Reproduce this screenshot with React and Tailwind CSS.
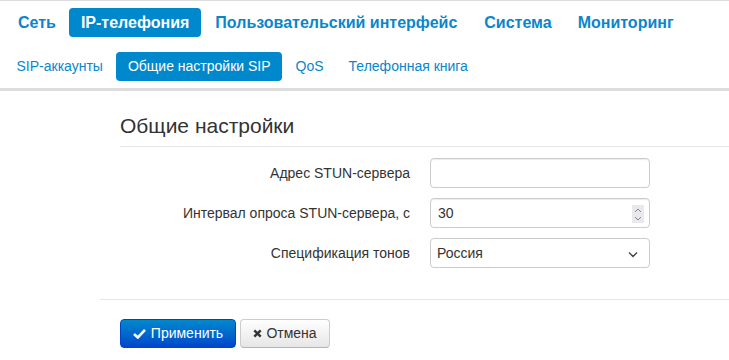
import React from "react";

const font = { fontFamily: '"Liberation Sans", Arial, sans-serif' };

function Chevron() {
  return (
    <svg width="10" height="7" viewBox="0 0 10 7" className="absolute right-[11px] top-[12px]">
      <path d="M1 1.5 L5 5.5 L9 1.5" fill="none" stroke="#444" strokeWidth="1.4" />
    </svg>
  );
}

function Spinner() {
  return (
    <div className="absolute right-[5px] top-[6px] w-[12px] h-[18px] bg-[#e9e9ed] flex flex-col items-center justify-center gap-[3px]">
      <svg width="8" height="5" viewBox="0 0 8 5">
        <path d="M1 4 L4 1 L7 4" fill="none" stroke="#888" strokeWidth="1" />
      </svg>
      <svg width="8" height="5" viewBox="0 0 8 5">
        <path d="M1 1 L4 4 L7 1" fill="none" stroke="#888" strokeWidth="1" />
      </svg>
    </div>
  );
}

export default function App() {
  const main = [
    ["Сеть", ""],
    ["IP-телефония", "ml-[1px]"],
    ["Пользовательский интерфейс", "ml-[2px]"],
    ["Система", "ml-[3px]"],
    ["Мониторинг", "ml-[2px]"],
  ];
  const sub = ["SIP-аккаунты", "Общие настройки SIP", "QoS", "Телефонная книга"];
  return (
    <div className="w-[729px] h-[360px] bg-white text-[#333] overflow-hidden" style={font}>
      <div className="border-t border-[#ddd]">
        <div className="flex pl-[6px] pt-[7px] h-[45px]">
          {main.map(([m, ml], i) => (
            <div
              key={m}
              className={
                "h-[29px] px-3 flex items-center rounded-[4px] text-[16px] font-bold " +
                ml +
                " " +
                (i === 1 ? "bg-[#0088cc] text-white" : "text-[#0a86cb]")
              }
            >
              {m}
            </div>
          ))}
        </div>
        <div className="flex gap-[2px] pl-[5px] pt-[6px] h-[42px]">
          {sub.map((m, i) => (
            <div
              key={m}
              className={
                "h-[29px] px-[11.5px] flex items-center rounded-[4px] text-[14px] " +
                (i === 1 ? "bg-[#0088cc] text-white" : "text-[#0a86cb]")
              }
            >
              {m}
            </div>
          ))}
        </div>
        <div className="h-[3px] bg-[#ddd]" />
      </div>

      <div className="pl-[100px]">
        <div className="pl-5 pt-[22px]">
          <div className="text-[21px] leading-[26px] h-[33px]">Общие настройки</div>
          <div className="border-t border-[#e5e5e5]" />
          <div className="flex flex-col gap-[10px] pt-[11px] pb-[31px]">
            <div className="flex items-center">
              <div className="w-[290px] text-right text-[14px]">Адрес STUN-сервера</div>
              <div className="ml-5 w-[220px] h-[30px] border border-[#ccc] rounded-[4px] shadow-[inset_0_1px_1px_rgba(0,0,0,0.075)]" />
            </div>
            <div className="flex items-center">
              <div className="w-[290px] text-right text-[14px]">Интервал опроса STUN-сервера, с</div>
              <div className="ml-5 relative w-[220px] h-[30px] border border-[#ccc] rounded-[4px] shadow-[inset_0_1px_1px_rgba(0,0,0,0.075)] flex items-center pl-[7px] text-[14px]">
                30
                <Spinner />
              </div>
            </div>
            <div className="flex items-center">
              <div className="w-[290px] text-right text-[14px]">Спецификация тонов</div>
              <div className="ml-5 relative w-[220px] h-[30px] border border-[#ccc] rounded-[4px] flex items-center pl-[6px] text-[14px]">
                Россия
                <Chevron />
              </div>
            </div>
          </div>
        </div>
        <div className="border-t border-[#e5e5e5] pl-5 pt-[19px] flex gap-[4px]">
          <button className="w-[116px] h-[29px] rounded-[4px] border border-[#0044cc] bg-gradient-to-b from-[#0088cc] to-[#0044cc] text-white text-[14px] flex items-center justify-center gap-[5px]">
            <svg width="13" height="11" viewBox="0 0 13 11">
              <path d="M1 6 L4.8 9.5 L12 1.8" fill="none" stroke="#fff" strokeWidth="2.6" />
            </svg>
            Применить
          </button>
          <button className="w-[90px] h-[29px] rounded-[4px] border border-[#ccc] border-b-[#b3b3b3] bg-gradient-to-b from-white to-[#e6e6e6] text-[#333] text-[14px] flex items-center justify-center gap-[4px]">
            <svg width="9" height="9" viewBox="0 0 9 9">
              <path d="M1.3 1.3 L7.7 7.7 M7.7 1.3 L1.3 7.7" fill="none" stroke="#333" strokeWidth="2.4" />
            </svg>
            Отмена
          </button>
        </div>
      </div>
    </div>
  );
}
